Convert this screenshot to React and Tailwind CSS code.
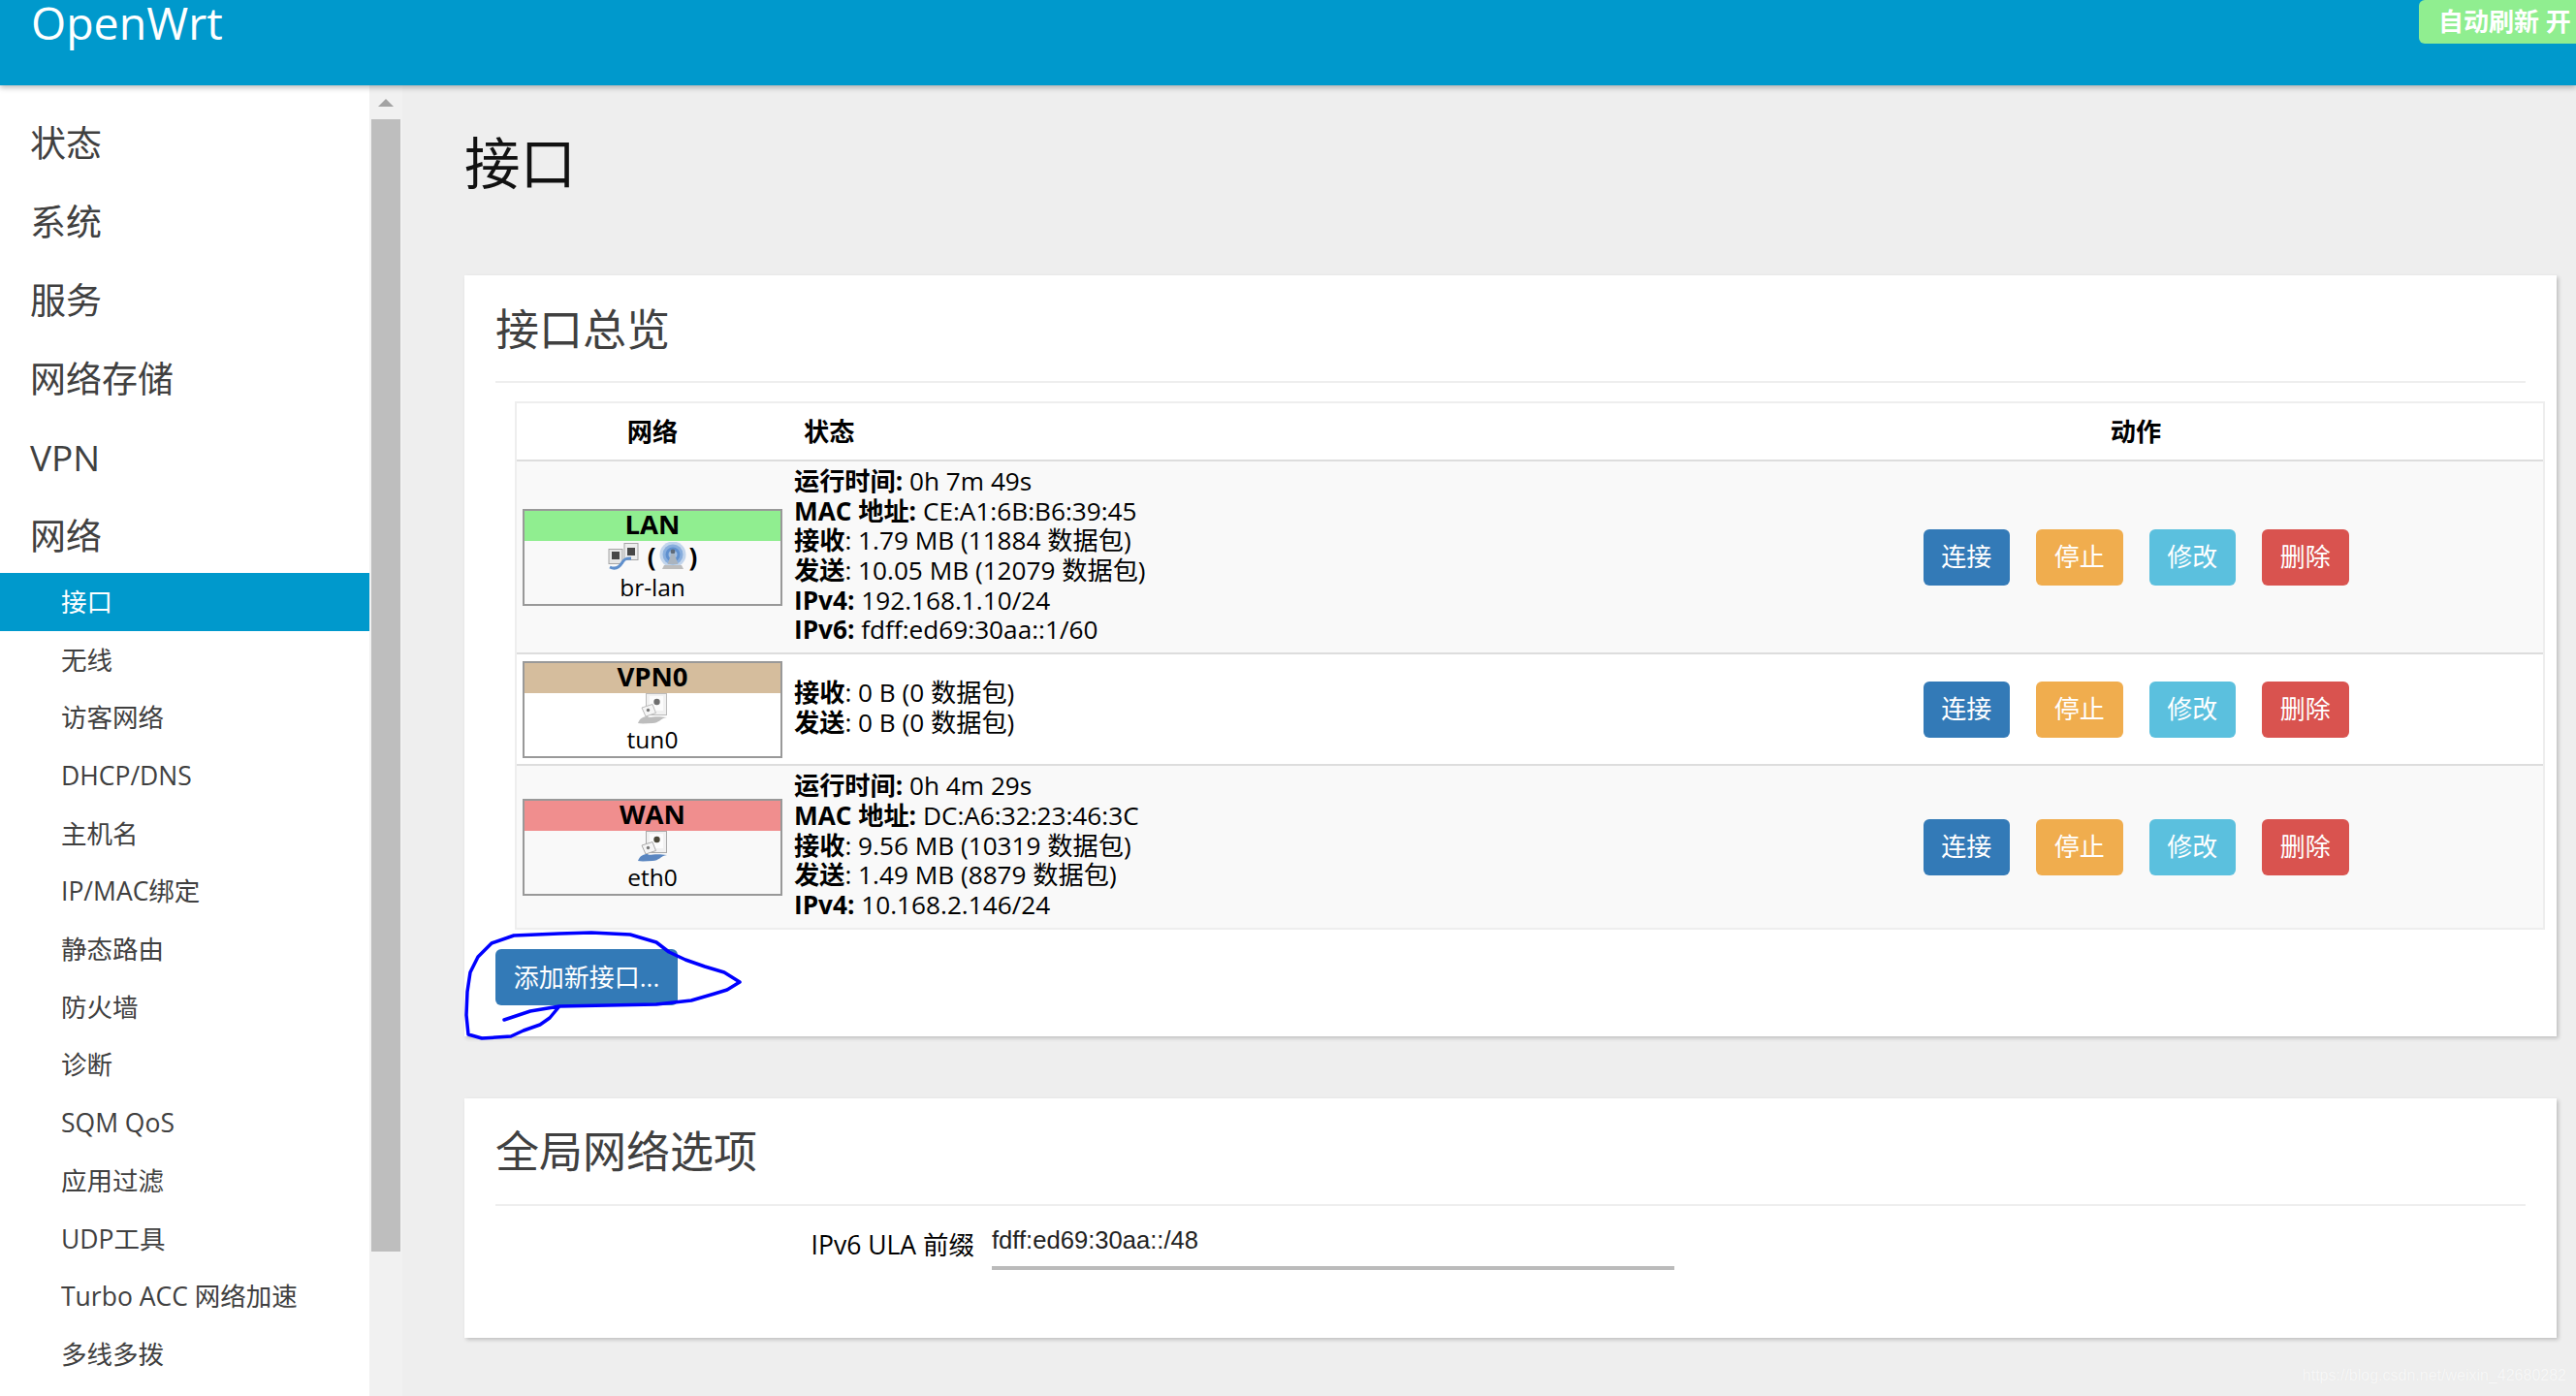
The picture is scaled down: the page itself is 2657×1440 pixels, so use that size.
const sans = "font-['Open_Sans','Noto_Sans_CJK_SC',sans-serif]";

const topItems = ["状态", "系统", "服务", "网络存储", "VPN", "网络"];
const subItems = [
  "接口",
  "无线",
  "访客网络",
  "DHCP/DNS",
  "主机名",
  "IP/MAC绑定",
  "静态路由",
  "防火墙",
  "诊断",
  "SQM QoS",
  "应用过滤",
  "UDP工具",
  "Turbo ACC 网络加速",
  "多线多拨",
];

const EthIcon = ({ cable = "#5a86c0", dot = "#4a4738", line = "#a9a9a9" }) => (
  <svg width="30" height="32" viewBox="0 0 30 32" className="block">
    <rect x="8.5" y="0.5" width="21" height="22" fill="#f1f1f1" stroke={line} />
    <rect x="12" y="3" width="14" height="15" fill="#fcfcfc" />
    <circle cx="19.5" cy="9" r="3.2" fill={dot} />
    <path d="M4 15l11-3.5 3.5 9L8 24z" fill="#f5f5f5" stroke={line} />
    <circle cx="10.5" cy="17.5" r="1.7" fill="#777" />
    <path d="M0 31c2-5 5-7 10-7 1 2 7-1 20 1-7 1-8 6-15 6-5 0-10 1-15 0z" fill={cable} />
  </svg>
);

const BridgeIcon = () => (
  <svg width="32" height="28" viewBox="0 0 32 28" className="block">
    <rect x="17" y="0.5" width="14" height="17" fill="#eee" stroke="#a5a5a5" />
    <path d="M20 5h8v8h-8z" fill="#474747" />
    <rect x="1" y="6.5" width="14" height="15" fill="#e6e6e6" stroke="#a5a5a5" />
    <path d="M4 9h8v8H4z" fill="#474747" />
    <path d="M2 25c6 3 10 0 13-5s6-4 9-4" fill="none" stroke="#5f8fcc" strokeWidth="3" />
  </svg>
);

const WifiIcon = () => (
  <svg width="30" height="30" viewBox="0 0 30 30" className="block">
    <circle cx="15" cy="13" r="13.5" fill="#c2d5ec" />
    <circle cx="15" cy="13" r="10.5" fill="#88aedd" />
    <circle cx="15" cy="13" r="7.5" fill="#5f90cf" />
    <circle cx="15" cy="13" r="4.5" fill="#a3bfe2" />
    <circle cx="15" cy="10" r="2.4" fill="#5e6a78" />
    <path d="M13.5 12h3l4 11h-11z" fill="#aab4bf" />
    <path d="M6 24h18l2 4H4z" fill="#bdbdbd" />
  </svg>
);

const Btn = ({ color, children }) => (
  <button className={`h-[58px] w-[89.5px] rounded-[6px] text-[26px] text-white ${color}`}>{children}</button>
);

const Actions = () => (
  <div className="flex items-center justify-center gap-[27px]">
    <Btn color="bg-[#337ab7]">连接</Btn>
    <Btn color="bg-[#f0ad4e]">停止</Btn>
    <Btn color="bg-[#5bc0de]">修改</Btn>
    <Btn color="bg-[#d9534f]">删除</Btn>
  </div>
);

const NetBox = ({ name, color, dev, children }) => (
  <div className="mx-auto h-[100px] w-[268px] border-2 border-[#999] text-center text-[24.5px] text-black">
    <div className={`h-[31px] text-[27.5px] leading-[27px] font-bold ${color}`}>{name}</div>
    <div className="flex h-[33px] items-center justify-center gap-[9px]">{children}</div>
    <div className="leading-[30px]">{dev}</div>
  </div>
);

const Line = ({ k, v, colon = true }) => (
  <div>
    <b>{k}</b>
    {colon ? ": " : " "}
    {v}
  </div>
);

const rows = [
  {
    h: "h-[197px]",
    bg: "bg-[#f9f9f9]",
    box: (
      <NetBox name="LAN" color="bg-[#90ee90]" dev="br-lan">
        <BridgeIcon />
        <span className="flex items-center gap-[2px] text-[26px] font-bold">
          (<WifiIcon />)
        </span>
      </NetBox>
    ),
    lines: [
      ["运行时间:", "0h 7m 49s", false],
      ["MAC 地址:", "CE:A1:6B:B6:39:45", false],
      ["接收", "1.79 MB (11884 数据包)", true],
      ["发送", "10.05 MB (12079 数据包)", true],
      ["IPv4:", "192.168.1.10/24", false],
      ["IPv6:", "fdff:ed69:30aa::1/60", false],
    ],
  },
  {
    h: "h-[113px]",
    bg: "bg-white",
    box: (
      <NetBox name="VPN0" color="bg-[#d5bd9d]" dev="tun0">
        <EthIcon cable="#bdbdbd" dot="#6f6f6f" line="#bbb" />
      </NetBox>
    ),
    lines: [
      ["接收", "0 B (0 数据包)", true],
      ["发送", "0 B (0 数据包)", true],
    ],
  },
  {
    h: "h-[167px]",
    bg: "bg-[#f9f9f9]",
    box: (
      <NetBox name="WAN" color="bg-[#f08e8e]" dev="eth0">
        <EthIcon />
      </NetBox>
    ),
    lines: [
      ["运行时间:", "0h 4m 29s", false],
      ["MAC 地址:", "DC:A6:32:23:46:3C", false],
      ["接收", "9.56 MB (10319 数据包)", true],
      ["发送", "1.49 MB (8879 数据包)", true],
      ["IPv4:", "10.168.2.146/24", false],
    ],
  },
];

export default function App() {
  return (
    <div className={`relative flex h-screen flex-col overflow-hidden bg-[#eee] ${sans}`}>
      <header className="relative z-10 flex h-[88px] shrink-0 items-start justify-between bg-[#0099cc] shadow-[0_2px_6px_rgba(0,0,0,0.3)]">
        <div className="pl-8 text-[46.5px] leading-[46px] text-white">OpenWrt</div>
        <div className="flex h-[45px] w-[162px] items-center rounded-l-[6px] bg-[#90ee90] pl-[20px] text-[26px] font-bold whitespace-nowrap text-white">
          自动刷新 开
        </div>
      </header>

      <div className="flex min-h-0 flex-1">
        <aside className="w-[381px] shrink-0 bg-white pt-[19px] text-[#404040]">
          {topItems.map((t) => (
            <div key={t} className="flex h-[81px] items-center pl-[31px] text-[37px]">
              {t}
            </div>
          ))}
          <div className="-mt-[2px]">
            {subItems.map((t, i) => (
              <div
                key={t}
                className={`flex h-[59.7px] items-center pt-[2px] pl-[63px] text-[26.5px] ${i === 0 ? "bg-[#0099cc] text-white" : ""}`}
              >
                {t}
              </div>
            ))}
          </div>
        </aside>

        <div className="w-[34px] shrink-0 bg-[#f1f1f1]">
          <div className="flex h-[35px] items-center justify-center">
            <div className="h-0 w-0 border-x-[8px] border-b-[8px] border-x-transparent border-b-[#a3a3a3]" />
          </div>
          <div className="mx-0.5 h-[1168px] bg-[#bebebe]" />
        </div>

        <main className="min-w-0 flex-1 pr-5 pl-16">
          <h1 className="mt-[50px] mb-[86px] text-[57.5px] leading-[60px] text-[#111]">接口</h1>

          <section className="relative bg-white px-8 pt-[26px] pb-8 shadow-[2px_2px_4px_rgba(0,0,0,0.2)]">
            <h2 className="border-b-2 border-[#eee] pb-[23px] text-[45px] leading-[60px] text-[#404040]">接口总览</h2>

            <div className="mt-[19px] -mr-5 ml-5 border-2 border-[#eee] text-[26.2px] leading-[30.7px] text-black">
              <div className="grid h-[60px] grid-cols-[280px_970px_1fr] items-center border-b-2 border-[#ddd] font-bold">
                <div className="text-center">网络</div>
                <div className="pl-4">状态</div>
                <div className="text-center">动作</div>
              </div>
              {rows.map((r, i) => (
                <div
                  key={i}
                  className={`grid grid-cols-[280px_970px_1fr] items-center ${r.h} ${r.bg} ${i < 2 ? "box-content border-b-2 border-[#ddd]" : ""}`}
                >
                  {r.box}
                  <div className="pb-[3px] pl-1.5">
                    {r.lines.map(([k, v, colon]) => (
                      <Line key={k} k={k} v={v} colon={colon} />
                    ))}
                  </div>
                  <Actions />
                </div>
              ))}
            </div>

            <button className="mt-5 block h-[58px] w-[188px] rounded-[6px] bg-[#337ab7] text-[26px] text-white">
              添加新接口...
            </button>

            {/* hand drawn marker around the add button */}
            <svg width="290" height="120" viewBox="0 0 290 120" className="absolute top-[672px] left-0" fill="none">
              <path
                d="M41 96L68 87L98 82L148 81L198 80L234 76L258 69L271 65L284 57L268 47L248 41L228 34L211 26L198 16L171 8L131 6L98 7L51 9L28 17L14 31L6 47L3 67L2 91L4 111L18 115L48 113L61 107L78 101L88 94L98 82"
                stroke="#0000ff"
                strokeWidth="3.5"
                strokeLinecap="round"
                strokeLinejoin="round"
              />
            </svg>
          </section>

          <section className="mt-16 h-[247px] bg-white px-8 pt-[25px] shadow-[2px_2px_4px_rgba(0,0,0,0.2)]">
            <h2 className="border-b-2 border-[#eee] pb-6 text-[45px] leading-[60px] text-[#404040]">全局网络选项</h2>
            <div className="mt-[18px] flex items-start gap-[18px]">
              <div className="w-[494px] text-right text-[26.5px] leading-[44px] text-black">IPv6 ULA 前缀</div>
              <div className="h-[48px] w-[704px] border-b-4 border-[#bbb] font-['Liberation_Sans','Noto_Sans_CJK_SC',sans-serif] text-[25.6px] leading-[34px] text-[#222]">
                fdff:ed69:30aa::/48
              </div>
            </div>
          </section>
        </main>
      </div>

      <div className="absolute right-[10px] bottom-[9px] font-['Liberation_Sans',sans-serif] text-[16px] text-[#f7f7f7] [text-shadow:0_0_1px_#e4e4e4]">
        https://blog.csdn.net/weixin_42680282
      </div>
    </div>
  );
}
